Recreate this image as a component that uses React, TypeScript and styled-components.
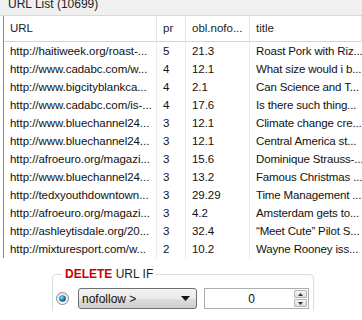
import React from "react";
import styled, { createGlobalStyle } from "styled-components";

const Global = createGlobalStyle`
  html, body { margin: 0; padding: 0; background: #ffffff; }
  body { font-family: "Liberation Sans", Arial, sans-serif; }
`;

const Page = styled.div`
  width: 362px;
  height: 320px;
  overflow: hidden;
  background: #ffffff;
  font-size: 11.5px;
  color: #1a1a1a;
`;

const TitleBar = styled.div`
  height: 15px;
  background: #f0f0f0;
  border-bottom: 1px solid #d9d9d9;
  padding-left: 8px;
  overflow: hidden;
`;

const TitleText = styled.div`
  font-size: 12px;
  line-height: 12px;
  margin-top: -2px;
  color: #222;
  white-space: nowrap;
`;

const Table = styled.div`
  margin-left: 3px;
  border-left: 1px solid #828790;
  display: grid;
  grid-template-columns: 153px 29px 64px 1fr;
`;

const HeadCell = styled.div`
  height: 25px;
  line-height: 25px;
  border-bottom: 1px solid #d5d5d5;
  border-right: 1px solid #e5e5e5;
  background: #ffffff;
  padding-left: 6px;
  white-space: nowrap;
  overflow: hidden;
  color: #222;
`;

const Cell = styled.div<{ $last?: boolean }>`
  height: 18px;
  line-height: 18px;
  border-right: ${(p) => (p.$last ? "none" : "1px solid #ececec")};
  padding-left: ${(p) => (p.$last ? "6px" : "6px")};
  letter-spacing: ${(p) => (p.$last ? "-0.15px" : "-0.05px")};
  white-space: nowrap;
  overflow: hidden;
  color: #111;
`;

const Bottom = styled.div`
  height: 53px;
  overflow: hidden;
`;

const Group = styled.fieldset`
  box-sizing: border-box;
  margin: 9px 0 0 52px;
  width: 262px;
  height: 70px;
  padding: 7px 3px 0 3px;
  border: 1px solid #d5dfe5;
  border-radius: 4px;
`;

const Legend = styled.legend`
  margin-left: 6px;
  padding: 0 3px;
  font-size: 12px;
  line-height: 14px;
  color: #1e1e1e;
`;

const Danger = styled.b`
  color: #cc0000;
`;

const Row = styled.div`
  display: flex;
  align-items: center;
  height: 21px;
`;

const Radio = styled.svg`
  width: 13px;
  height: 13px;
  flex: none;
  margin-right: 9px;
`;

const Select = styled.div`
  box-sizing: border-box;
  width: 119px;
  height: 21px;
  border: 1px solid #707070;
  border-radius: 3px;
  background: linear-gradient(#f2f2f2 0%, #ebebeb 50%, #dddddd 51%, #cfcfcf 100%);
  display: flex;
  align-items: center;
  padding-left: 3px;
  font-size: 12px;
  color: #111;
`;

const SelectText = styled.span`
  flex: 1;
`;

const Arrow = styled.svg`
  width: 9px;
  height: 5px;
  margin-right: 6px;
`;

const NumberBox = styled.div`
  box-sizing: border-box;
  width: 105px;
  height: 21px;
  margin-left: 7px;
  border: 1px solid #abadb3;
  background: #fff;
  display: flex;
  align-items: center;
`;

const NumberText = styled.span`
  flex: 1;
  text-align: center;
  font-size: 12px;
  padding-left: 4px;
  color: #111;
`;

const Spinner = styled.div`
  display: flex;
  flex-direction: column;
  width: 13px;
  height: 17px;
  margin-right: 1px;
  gap: 1px;
`;

const SpinButton = styled.div`
  flex: 1;
  box-sizing: border-box;
  border: 1px solid #b5b5b5;
  border-radius: 1px;
  background: linear-gradient(#f6f6f6, #dedede);
  display: flex;
  align-items: center;
  justify-content: center;
`;

const rows: [string, string, string, string][] = [
  ["http://haitiweek.org/roast-...", "5", "21.3", "Roast Pork with Riz..."],
  ["http://www.cadabc.com/w...", "4", "12.1", "What size would i b..."],
  ["http://www.bigcityblankca...", "4", "2.1", "Can Science and T..."],
  ["http://www.cadabc.com/is-...", "4", "17.6", "Is there such thing..."],
  ["http://www.bluechannel24...", "3", "12.1", "Climate change cre..."],
  ["http://www.bluechannel24...", "3", "12.1", "Central America st..."],
  ["http://afroeuro.org/magazi...", "3", "15.6", "Dominique Strauss-..."],
  ["http://www.bluechannel24...", "3", "13.2", "Famous Christmas ..."],
  ["http://tedxyouthdowntown...", "3", "29.29", "Time Management ..."],
  ["http://afroeuro.org/magazi...", "3", "4.2", "Amsterdam gets to..."],
  ["http://ashleytisdale.org/20...", "3", "32.4", "\u201cMeet Cute\u201d Pilot S..."],
  ["http://mixturesport.com/w...", "2", "10.2", "Wayne Rooney iss..."],
];

export default function App() {
  return (
    <Page>
      <Global />
      <TitleBar>
        <TitleText>URL List (10699)</TitleText>
      </TitleBar>
      <Table>
        <HeadCell>URL</HeadCell>
        <HeadCell>pr</HeadCell>
        <HeadCell>obl.nofo...</HeadCell>
        <HeadCell>title</HeadCell>
        {rows.map((r, i) => (
          <React.Fragment key={i}>
            <Cell>{r[0]}</Cell>
            <Cell>{r[1]}</Cell>
            <Cell>{r[2]}</Cell>
            <Cell $last>{r[3]}</Cell>
          </React.Fragment>
        ))}
      </Table>
      <Bottom>
        <Group>
          <Legend>
            <Danger>DELETE</Danger> URL IF
          </Legend>
          <Row>
            <Radio viewBox="0 0 13 13">
              <defs>
                <radialGradient id="rdot" cx="40%" cy="35%" r="70%">
                  <stop offset="0%" stopColor="#8fe0ff" />
                  <stop offset="55%" stopColor="#1f7fb8" />
                  <stop offset="100%" stopColor="#0b3f66" />
                </radialGradient>
                <linearGradient id="rring" x1="0" y1="0" x2="0" y2="1">
                  <stop offset="0%" stopColor="#e8e8e8" />
                  <stop offset="100%" stopColor="#f8f8f8" />
                </linearGradient>
              </defs>
              <circle cx="6.5" cy="6.5" r="6" fill="url(#rring)" stroke="#8a8a8a" strokeWidth="1" />
              <circle cx="6.5" cy="6.5" r="3.3" fill="url(#rdot)" />
            </Radio>
            <Select>
              <SelectText>nofollow &gt;</SelectText>
              <Arrow viewBox="0 0 9 5">
                <path d="M0 0 H9 L4.5 5 Z" fill="#111" />
              </Arrow>
            </Select>
            <NumberBox>
              <NumberText>0</NumberText>
              <Spinner>
                <SpinButton>
                  <svg width="5" height="3" viewBox="0 0 5 3">
                    <path d="M0 3 H5 L2.5 0 Z" fill="#333" />
                  </svg>
                </SpinButton>
                <SpinButton>
                  <svg width="5" height="3" viewBox="0 0 5 3">
                    <path d="M0 0 H5 L2.5 3 Z" fill="#333" />
                  </svg>
                </SpinButton>
              </Spinner>
            </NumberBox>
          </Row>
        </Group>
      </Bottom>
    </Page>
  );
}
